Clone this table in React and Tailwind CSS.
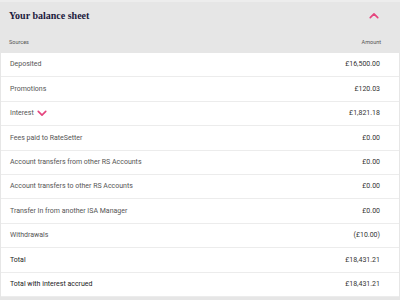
import React from "react";

const rows = [
  ["Deposited", "£16,500.00"],
  ["Promotions", "£120.03"],
  ["Interest", "£1,821.18", true],
  ["Fees paid to RateSetter", "£0.00"],
  ["Account transfers from other RS Accounts", "£0.00"],
  ["Account transfers to other RS Accounts", "£0.00"],
  ["Transfer In from another ISA Manager", "£0.00"],
  ["Withdrawals", "(£10.00)"],
  ["Total", "£18,431.21", false, true],
  ["Total with interest accrued", "£18,431.21", false, true],
];

function Chevron({ up, className }) {
  return (
    <svg viewBox="0 0 12 8" className={className} fill="none" stroke="#e5457e" strokeWidth="2" strokeLinecap="round" strokeLinejoin="round">
      {up ? <polyline points="1.5,6.5 6,2 10.5,6.5" /> : <polyline points="1.5,1.5 6,6 10.5,1.5" />}
    </svg>
  );
}

export default function App() {
  return (
    <div className="w-[400px] h-[300px] bg-[#e6e6e6] overflow-hidden" style={{ fontFamily: "Roboto, 'Liberation Sans', sans-serif" }}>
      <div className="h-[2px] bg-[#ededed]" />
      <div className="flex items-center justify-between pl-[9px] pr-[21px] h-[27px]">
        <span className="text-[10px] font-bold text-[#1b1a3d]" style={{ fontFamily: "'Liberation Serif', serif" }}>Your balance sheet</span>
        <Chevron up className="w-[10px] h-[7px]" />
      </div>
      <div className="flex items-center justify-between pl-[9px] pr-[19px] h-[24px] pt-[2px] text-[5.5px] text-[#555]">
        <span>Sources</span>
        <span>Amount</span>
      </div>
      <div className="ml-[1px] mr-[1px] bg-white">
        {rows.map(([label, amount, chev, bold], i) => (
          <div key={i} className="flex items-center justify-between pl-[9px] pr-[19px] h-[24.4px] border-b border-[#ececec] text-[7px]">
            <span className={`flex items-center gap-[3px] ${bold ? "text-[#222]" : "text-[#555]"}`}>
              {label}
              {chev && <Chevron className="w-[10px] h-[7px]" />}
            </span>
            <span className="text-[#333]">{amount}</span>
          </div>
        ))}
      </div>
    </div>
  );
}
